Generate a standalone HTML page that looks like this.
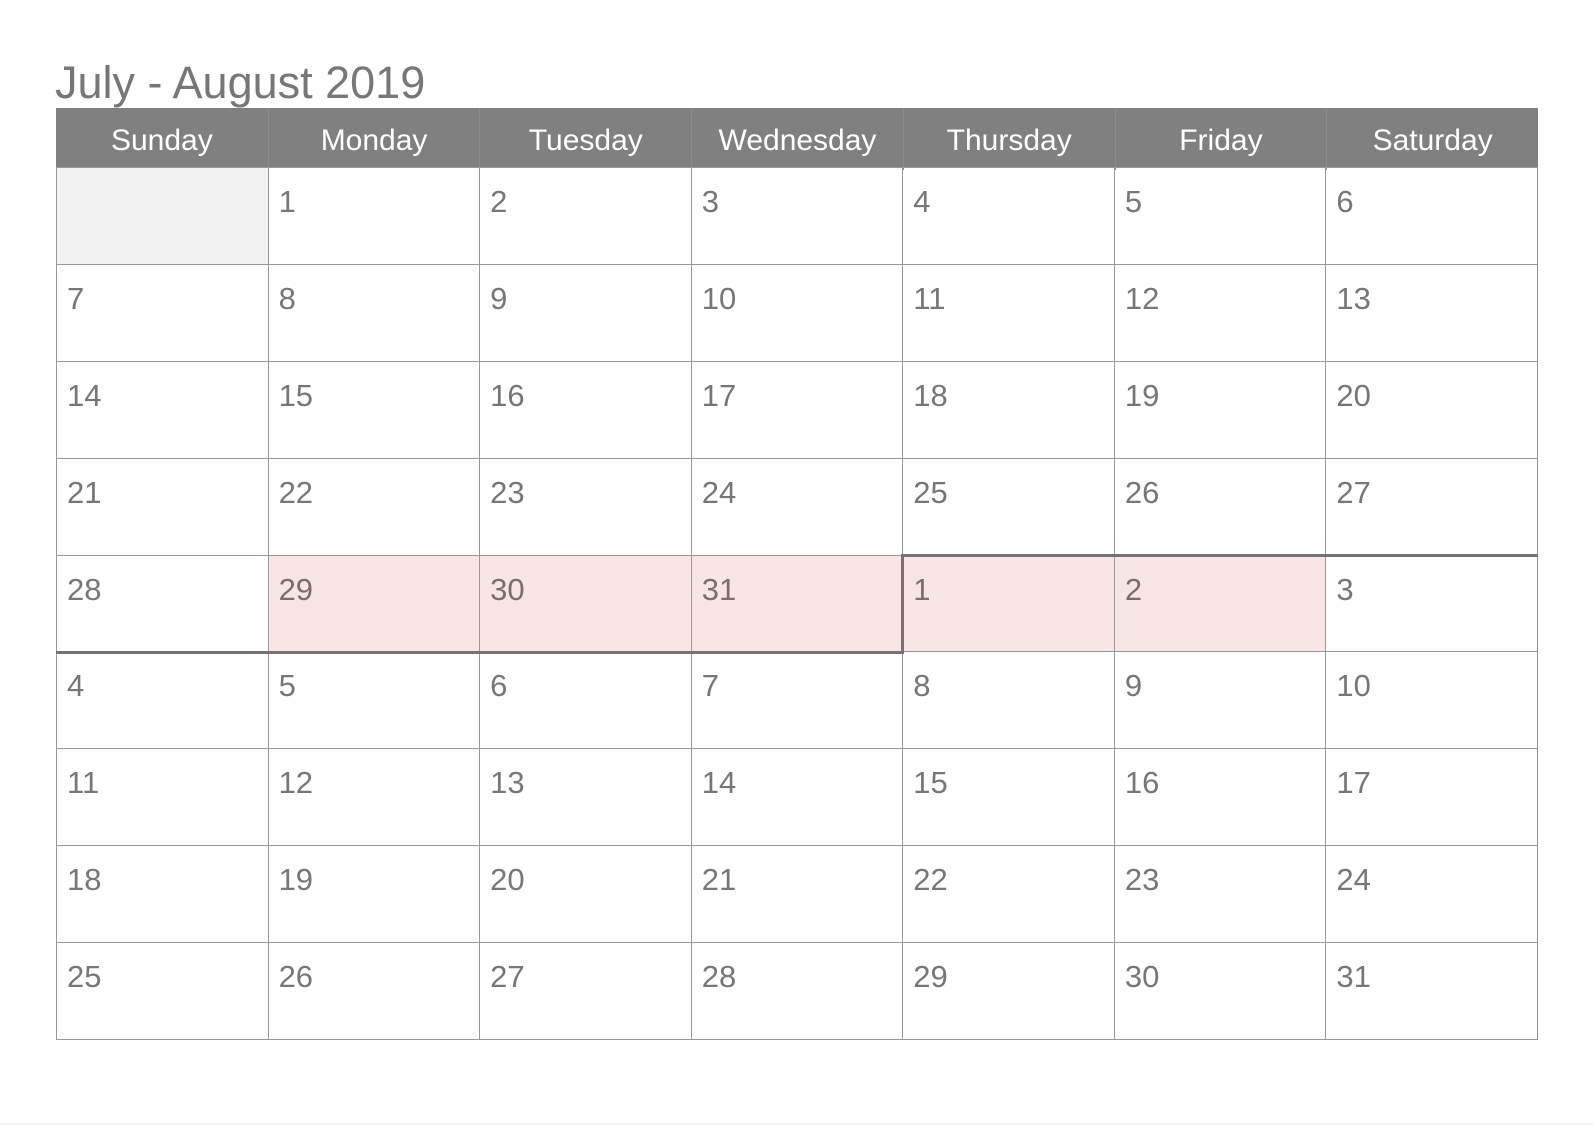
<!DOCTYPE html>
<html><head><meta charset="utf-8"><style>
html,body{margin:0;padding:0;background:#fff;width:1593px;height:1125px;overflow:hidden;font-family:"Liberation Sans",Arial,sans-serif}
.title{position:absolute;left:55px;top:57px;font-size:45px;color:#777;line-height:52px}
.hdr{position:absolute;left:56px;top:108px;width:1482px;height:59px;background:#808080;display:grid;grid-template-columns:repeat(7,1fr)}
.hdr div{color:#fff;font-size:30px;text-align:center;line-height:59px;padding-top:3px;box-sizing:border-box;border-left:1px solid #8c8c8c}
.hdr div:first-child{border-left:none}
.grid{position:absolute;left:56px;top:167px;width:1482px;height:873px;display:grid;grid-template-columns:repeat(7,1fr);grid-template-rows:repeat(9,1fr);border-right:1px solid #999;border-bottom:1px solid #999;box-sizing:border-box}
.grid div{border-left:1px solid #999;border-top:1px solid #999;font-size:31px;color:#777;line-height:31px;padding:18px 0 0 10px;box-sizing:border-box}
.grid .e{background:#f2f2f2}
.grid .p{background:#f8e6e6;color:#7d6d6f}
.tk{position:absolute;background:#7a7272}
</style></head><body>
<div class="title">July - August 2019</div>
<div class="hdr"><div>Sunday</div><div>Monday</div><div>Tuesday</div><div>Wednesday</div><div>Thursday</div><div>Friday</div><div>Saturday</div></div>
<div class="grid">
<div class="e"></div><div>1</div><div>2</div><div>3</div><div>4</div><div>5</div><div>6</div>
<div>7</div><div>8</div><div>9</div><div>10</div><div>11</div><div>12</div><div>13</div>
<div>14</div><div>15</div><div>16</div><div>17</div><div>18</div><div>19</div><div>20</div>
<div>21</div><div>22</div><div>23</div><div>24</div><div>25</div><div>26</div><div>27</div>
<div>28</div><div class="p">29</div><div class="p">30</div><div class="p">31</div><div class="p">1</div><div class="p">2</div><div>3</div>
<div>4</div><div>5</div><div>6</div><div>7</div><div>8</div><div>9</div><div>10</div>
<div>11</div><div>12</div><div>13</div><div>14</div><div>15</div><div>16</div><div>17</div>
<div>18</div><div>19</div><div>20</div><div>21</div><div>22</div><div>23</div><div>24</div>
<div>25</div><div>26</div><div>27</div><div>28</div><div>29</div><div>30</div><div>31</div>
</div>
<div class="tk" style="left:56px;top:651px;width:848px;height:3px"></div>
<div class="tk" style="left:901px;top:554px;width:3px;height:100px"></div>
<div class="tk" style="left:901px;top:554px;width:637px;height:3px"></div>
<div style="position:absolute;left:0;top:1123px;width:1593px;height:2px;background:#f2f2f2"></div>
</body></html>
